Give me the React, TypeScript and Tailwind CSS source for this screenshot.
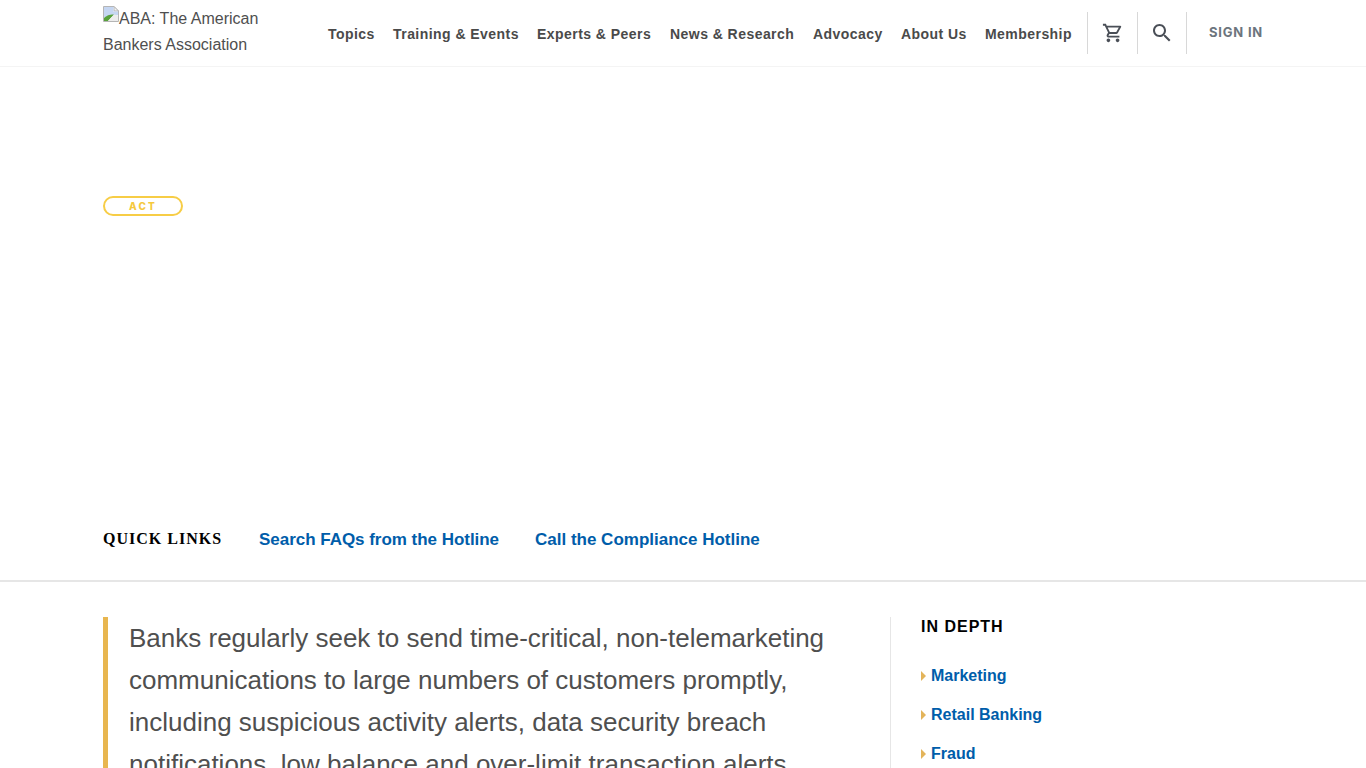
import React from "react";

const NAV = [
  ["Topics", "w-[65px]"],
  ["Training & Events", "w-[144px]"],
  ["Experts & Peers", "w-[133px]"],
  ["News & Research", "w-[143px]"],
  ["Advocacy", "w-[88px]"],
  ["About Us", "w-[84px]"],
  ["Membership", "w-[103px]"],
];

function BrokenImage() {
  return (
    <svg width="16" height="16" viewBox="0 0 16 16" className="inline-block align-baseline relative -top-[2px]">
      <path d="M0.5 0.5H11L15.5 5V15.5H0.5Z" fill="#fff" stroke="#b5b5b5" />
      <path d="M11 0.5V5H15.5Z" fill="#f2f2f2" stroke="#b5b5b5" />
      <path d="M1 1H10.5V5.5H15V9L1 13Z" fill="#c5d6f2" />
      <path d="M1 15V12C4 9 8 8 11 8.5L5 15Z" fill="#58a23c" />
      <path d="M5 15L11 8.5L15 9.5V15Z" fill="#ececec" />
    </svg>
  );
}

function Arrow() {
  return <span className="w-0 h-0 border-y-[5px] border-y-transparent border-l-[5px] border-l-[#e3b45a] mr-[5px]" />;
}

export default function App() {
  return (
    <div className="h-screen overflow-hidden bg-white font-['Liberation_Sans',Arial,sans-serif]">
      <header className="h-[67px] border-b border-[#f4f4f4] flex items-start pl-[103px]">
        <div className="w-[216px] pt-[6px] text-[16px] leading-[26px] text-[#4f4f4f]">
          <div className="w-[170px]">
            <BrokenImage />
            ABA: The American Bankers Association
          </div>
        </div>
        <nav className="flex items-center h-[68px] pl-[9px] text-[14px] font-bold tracking-[0.45px] text-[#4a4a4a]">
          {NAV.map(([label, w]) => (
            <span key={label} className={`${w} whitespace-nowrap`}>{label}</span>
          ))}
        </nav>
        <div className="flex items-center h-[42px] mt-[12px] -ml-[1px]">
          <div className="w-[50px] h-[42px] border-l border-[#d8d8d8] pl-[14px] pt-[10px]">
            <svg width="22" height="22" viewBox="0 0 24 24" fill="#4a4f57">
              <path d="M15.55 13c.75 0 1.41-.41 1.75-1.03l3.58-6.49c.37-.66-.11-1.48-.87-1.48H5.21l-.94-2H1v2h2l3.6 7.59-1.35 2.44C4.52 15.37 5.48 17 7 17h12v-2H7l1.1-2h7.45zM6.16 6h12.15l-2.76 5H8.53L6.16 6zM7 18c-1.1 0-1.99.9-1.99 2S5.9 22 7 22s2-.9 2-2-.9-2-2-2zm10 0c-1.1 0-1.99.9-1.99 2s.89 2 1.99 2 2-.9 2-2-.9-2-2-2z" />
            </svg>
          </div>
          <div className="w-[49px] h-[42px] border-l border-[#d8d8d8] pl-[12px] pt-[9px]">
            <svg width="24" height="24" viewBox="0 0 24 24" fill="#4a4f57">
              <path d="M15.5 14h-.79l-.28-.27C15.41 12.59 16 11.11 16 9.5 16 5.91 13.09 3 9.5 3S3 5.91 3 9.5 5.91 16 9.5 16c1.61 0 3.09-.59 4.23-1.57l.27.28v.79l5 4.99L20.49 19l-4.99-5zm-6 0C7.01 14 5 11.99 5 9.5S7.01 5 9.5 5 14 7.01 14 9.5 11.99 14 9.5 14z" />
            </svg>
          </div>
          <div className="h-[42px] border-l border-[#d8d8d8] pl-[22px] pb-[1px] flex items-center font-['Inter',sans-serif] text-[13px] font-bold tracking-[0.8px] text-[#6c757d]">
            SIGN IN
          </div>
        </div>
      </header>

      <div className="h-[515px] border-b-2 border-[#e6e6e6] px-[103px] flex flex-col">
        <div className="mt-[129px] w-[80px] h-[20px] rounded-full border-2 border-[#f7cd46] flex items-center justify-center font-['Inter',sans-serif] text-[10px] font-extrabold tracking-[2.2px] pt-[1px] text-[#f5c93f]">
          ACT
        </div>
        <div className="mt-[311px] flex items-center">
          <span className="w-[156px] -mt-[2px] font-['Liberation_Serif',serif] font-bold text-[16px] tracking-[1px] text-black">QUICK LINKS</span>
          <a className="w-[276px] text-[17px] font-bold text-[#005daa] tracking-[-0.03px]">Search FAQs from the Hotline</a>
          <a className="text-[17px] font-bold text-[#005daa]">Call the Compliance Hotline</a>
        </div>
      </div>

      <main className="flex pl-[103px] pt-[35px]">
        <div className="w-[787px] border-l-[5px] border-[#e8b64f] pl-[21px] pr-[60px] text-[26px] leading-[42px] text-[#4f4f4f] h-[300px]">
          Banks regularly seek to send time-critical, non-telemarketing communications to large numbers of customers promptly, including suspicious activity alerts, data security breach notifications, low balance and over-limit transaction alerts
        </div>
        <aside className="border-l border-[#e6e6e6] pl-[30px] h-[300px]">
          <h2 className="font-bold text-[16px] tracking-[1px] text-black leading-[20px]">IN DEPTH</h2>
          <ul className="mt-[19px] text-[16px] font-bold text-[#005daa]">
            <li className="flex items-center h-[39px]"><Arrow />Marketing</li>
            <li className="flex items-center h-[39px]"><Arrow />Retail Banking</li>
            <li className="flex items-center h-[39px]"><Arrow />Fraud</li>
          </ul>
        </aside>
      </main>
    </div>
  );
}
